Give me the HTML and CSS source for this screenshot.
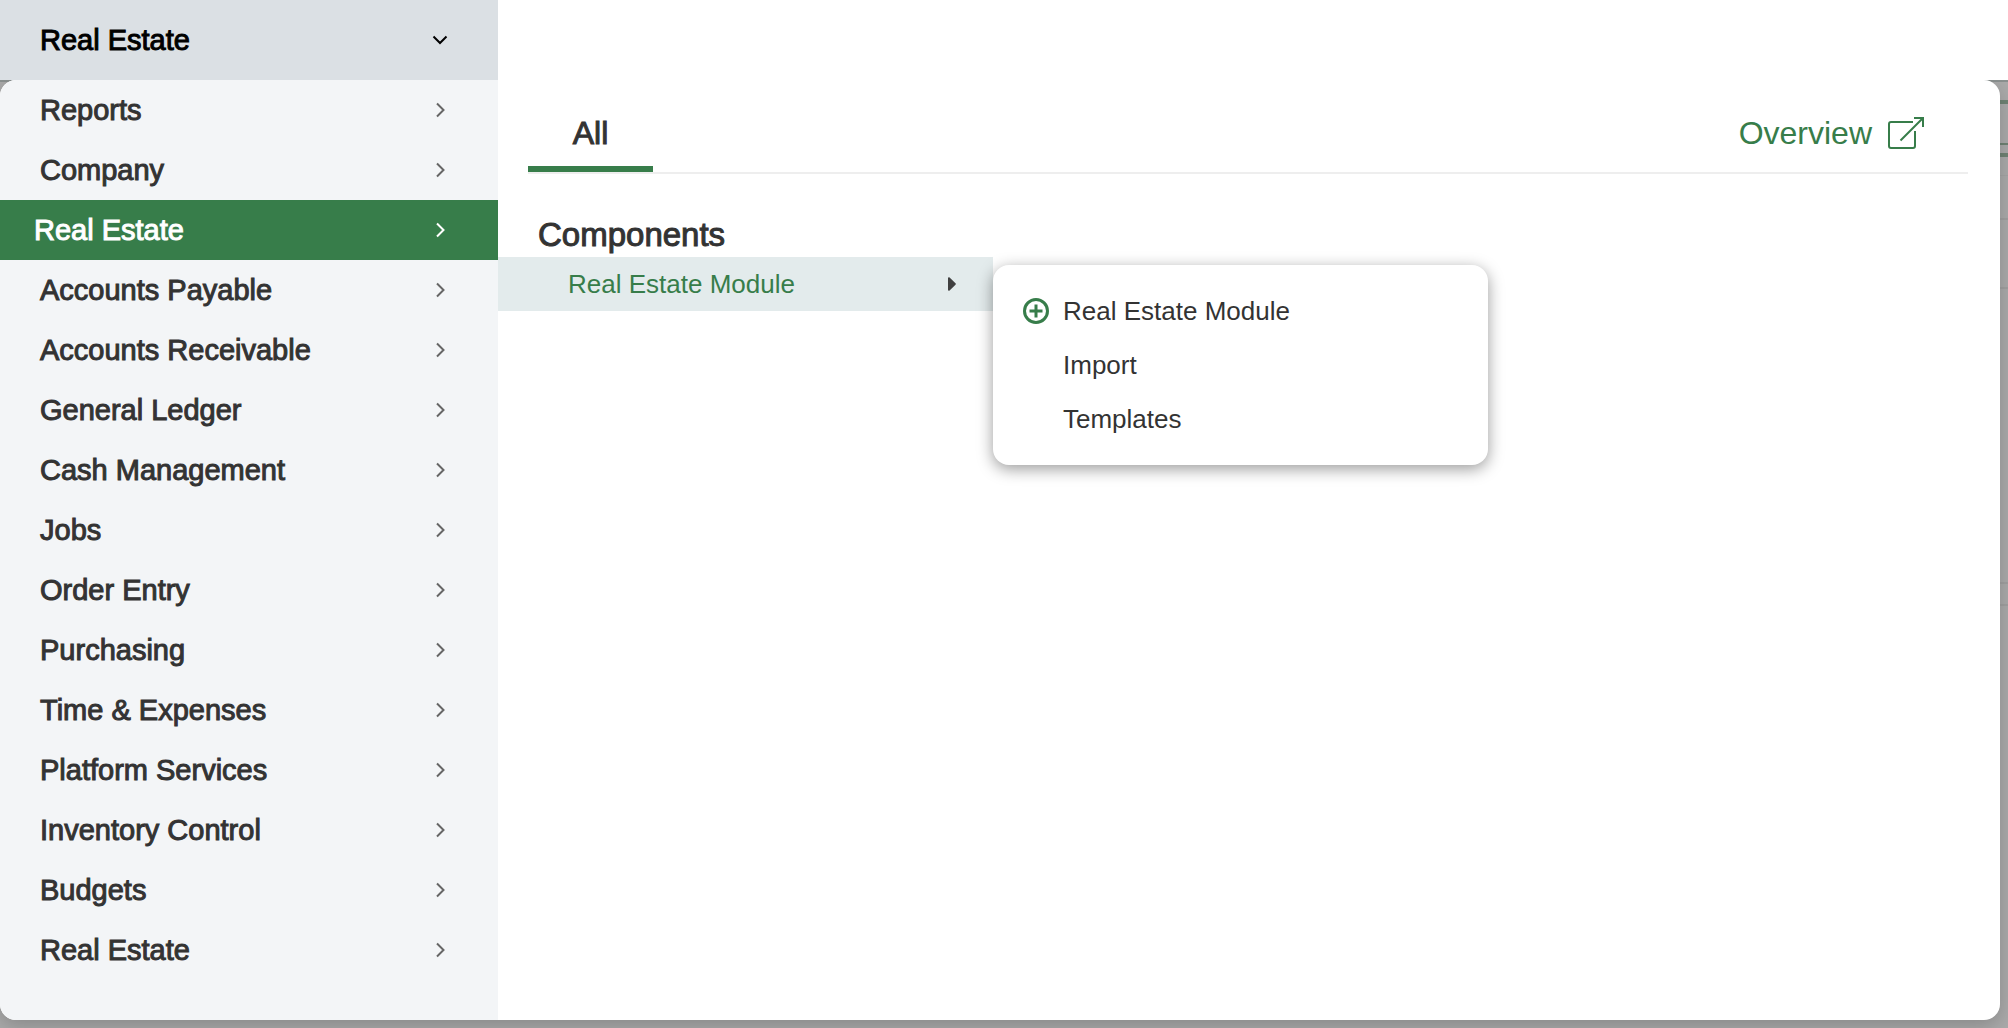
FILE: index.html
```html
<!DOCTYPE html>
<html lang="en">
<head>
<meta charset="utf-8">
<meta name="viewport" content="width=device-width, initial-scale=1">
<title>Real Estate</title>
<link rel="stylesheet" href="styles.css">
</head>
<body>
<svg class="defs" aria-hidden="true">
  <symbol id="chevron" viewBox="0 0 16 16"><path d="M5 1.500l6.500 6.500L5 14.500"/></symbol>
</svg>
<header class="topbar">
  <button class="module-switch" type="button" aria-expanded="true">
    <span>Real Estate</span>
    <svg class="chevron" viewBox="0 0 16 16" aria-hidden="true"><path d="M1.500 4.500L8 11l6.500-6.500"/></svg>
  </button>
</header>
<main class="backdrop">
  <div class="panel">
    <nav class="sidebar" aria-label="Modules">
      <a class="item" href="#"><span>Reports</span><svg class="chevron"><use href="#chevron"/></svg></a>
      <a class="item" href="#"><span>Company</span><svg class="chevron"><use href="#chevron"/></svg></a>
      <a class="item active" href="#" aria-current="true"><span>Real Estate</span><svg class="chevron"><use href="#chevron"/></svg></a>
      <a class="item" href="#"><span>Accounts Payable</span><svg class="chevron"><use href="#chevron"/></svg></a>
      <a class="item" href="#"><span>Accounts Receivable</span><svg class="chevron"><use href="#chevron"/></svg></a>
      <a class="item" href="#"><span>General Ledger</span><svg class="chevron"><use href="#chevron"/></svg></a>
      <a class="item" href="#"><span>Cash Management</span><svg class="chevron"><use href="#chevron"/></svg></a>
      <a class="item" href="#"><span>Jobs</span><svg class="chevron"><use href="#chevron"/></svg></a>
      <a class="item" href="#"><span>Order Entry</span><svg class="chevron"><use href="#chevron"/></svg></a>
      <a class="item" href="#"><span>Purchasing</span><svg class="chevron"><use href="#chevron"/></svg></a>
      <a class="item" href="#"><span>Time &amp; Expenses</span><svg class="chevron"><use href="#chevron"/></svg></a>
      <a class="item" href="#"><span>Platform Services</span><svg class="chevron"><use href="#chevron"/></svg></a>
      <a class="item" href="#"><span>Inventory Control</span><svg class="chevron"><use href="#chevron"/></svg></a>
      <a class="item" href="#"><span>Budgets</span><svg class="chevron"><use href="#chevron"/></svg></a>
      <a class="item" href="#"><span>Real Estate</span><svg class="chevron"><use href="#chevron"/></svg></a>
    </nav>
    <section class="content">
      <div class="tabs">
        <button class="tab" type="button">All</button>
        <a class="overview" href="#">
          <span>Overview</span>
          <svg class="external" viewBox="0 0 36 32" aria-hidden="true">
            <path d="M25 5H3a2 2 0 0 0-2 2v22a2 2 0 0 0 2 2h22a2 2 0 0 0 2-2V14"/>
            <path d="M12.500 23.500L35 1M26 1h9v9"/>
          </svg>
        </a>
      </div>
      <h2 class="heading">Components</h2>
      <div class="component">
        <a class="component-link" href="#">
          <span>Real Estate Module</span>
          <svg class="caret" viewBox="0 0 8 14" aria-hidden="true"><path d="M0 1.200C0 0 1 0 1.600.600L7.500 6.300a1 1 0 0 1 0 1.400L1.600 13.400C1 14 0 14 0 12.800z"/></svg>
        </a>
        <div class="submenu">
          <a href="#">
            <svg class="plus" viewBox="0 0 26 26" aria-hidden="true"><circle cx="13" cy="13" r="11.500"/><path d="M13 6.500v13M6.500 13h13"/></svg>
            <span>Real Estate Module</span>
          </a>
          <a href="#"><span>Import</span></a>
          <a href="#"><span>Templates</span></a>
        </div>
      </div>
    </section>
  </div>
</main>
</body>
</html>
```
FILE: styles.css
```css
:root {
  --green: #377d4a;
  --ink: #333333;
}

* {
  box-sizing: border-box;
}

body {
  margin: 0;
  min-height: 100vh;
  display: flex;
  flex-direction: column;
  background: #ffffff;
  color: var(--ink);
  font-family: "Liberation Sans", Arial, sans-serif;
  font-size: 26px;
}

a {
  color: inherit;
  text-decoration: none;
}

button {
  border: 0;
  background: none;
  color: inherit;
  font: inherit;
  cursor: pointer;
}

.defs {
  display: none;
}

.topbar {
  display: flex;
  height: 80px;
}

.module-switch,
.item {
  display: flex;
  align-items: center;
  justify-content: space-between;
  padding: 0 50px 0 40px;
  font-size: 29px;
}

.module-switch {
  width: 498px;
  background: #dbe0e4;
  color: #000000;
}

/* Liberation Sans has no medium weight, so a thin stroke thickens the regular one */
.module-switch span,
.item span,
.tab,
.heading {
  -webkit-text-stroke: 1px currentColor;
}

.chevron {
  width: 16px;
  height: 16px;
  fill: none;
  stroke: currentColor;
  stroke-width: 2;
}

/* Dimmed page that shows round the open menu */
.backdrop {
  flex: 1;
  display: flex;
  padding: 0 8px 8px 0;
  background: linear-gradient(
    #8b9190 0 2px, #aaaaaa 2px 20px,
    #6f8374 20px 24px, #aaaaaa 24px 63px,
    #6f8374 63px 65px, #aaaaaa 65px 73px,
    #6f8374 73px 77px, #aaaaaa 77px 95px,
    #a4a4a4 95px 96px, #aaaaaa 96px 138px,
    #a0a0a0 138px 140px, #aaaaaa 140px 207px,
    #a0a0a0 207px 209px, #aaaaaa 209px 502px,
    #a0a0a0 502px 504px, #aaaaaa 504px 524px,
    #a0a0a0 524px 526px, #aaaaaa 526px);
  overflow: hidden;
}

.panel {
  flex: 1;
  display: grid;
  grid-template-columns: 498px 1fr;
  border-radius: 16px;
  background: #ffffff;
  box-shadow: 0 6px 20px rgba(0, 0, 0, 0.2);
}

.sidebar {
  border-radius: 16px 0 0 16px;
  background: #f3f5f7;
}

.item {
  height: 60px;
}

.item .chevron {
  color: #666666;
}

.item.active {
  padding-left: 34px;
  background: var(--green);
  color: #ffffff;
}

.item.active .chevron {
  color: #ffffff;
}

.tabs {
  display: flex;
  justify-content: space-between;
  height: 94px;
  margin: 0 32px 0 30px;
  border-bottom: 2px solid #eeeeee;
  font-size: 32px;
}

.tab {
  width: 125px;
  padding: 20px 0 0;
  border-bottom: 6px solid var(--green);
}

.overview {
  display: flex;
  align-items: center;
  gap: 16px;
  padding: 14px 44px 0 0;
  color: var(--green);
}

.external {
  width: 36px;
  height: 32px;
  fill: none;
  stroke: currentColor;
  stroke-width: 2;
}

.heading {
  margin: 40px 0 2px 40px;
  font-size: 33px;
  font-weight: 400;
  line-height: 41px;
}

.component {
  position: relative;
  width: 495px;
}

.component-link {
  display: flex;
  align-items: center;
  justify-content: space-between;
  height: 54px;
  padding: 0 37px 0 70px;
  background: #e3ebec;
  color: var(--green);
}

.caret {
  width: 8px;
  height: 14px;
  fill: #404040;
}

.submenu {
  position: absolute;
  top: 8px;
  left: 100%;
  width: 495px;
  padding: 19px 30px;
  border-radius: 16px;
  background: #ffffff;
  box-shadow: 0 4px 16px rgba(0, 0, 0, 0.4);
}

.submenu a {
  display: grid;
  grid-template-columns: 26px 1fr;
  column-gap: 14px;
  align-items: center;
  height: 54px;
}

.submenu span {
  grid-column: 2;
}

.plus {
  width: 26px;
  height: 26px;
  fill: none;
  stroke: var(--green);
  stroke-width: 3;
}
```
